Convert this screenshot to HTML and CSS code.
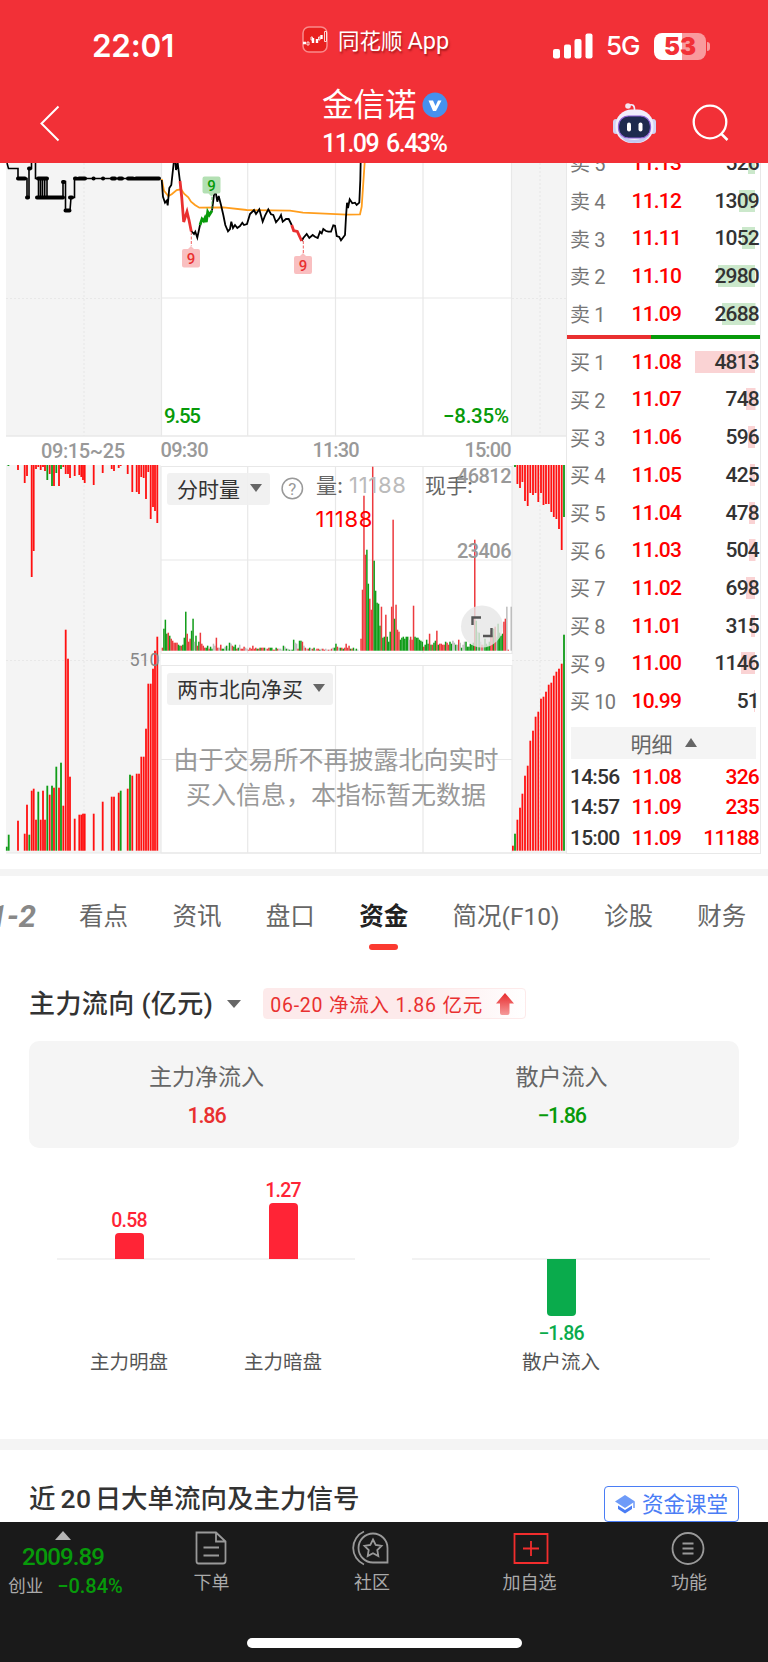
FILE: index.html
```html
<!DOCTYPE html>
<html lang="zh-CN">
<head>
<meta charset="UTF-8">
<meta name="viewport" content="width=device-width, initial-scale=1.0">
<title>金信诺</title>
<link rel="stylesheet" href="styles.css">
</head>
<body>
<header class="header">
  <div class="status">
    <div class="time">22:01</div>
    <div class="app">
      <svg width="26" height="27" viewBox="0 0 26 27">
        <rect x="1" y="1" width="24" height="25" rx="6" fill="#e8201f" stroke="#f98a8c" stroke-width="1.5"/>
        <path d="M1 17h3M11 12v5M15 13v4M19.500 9v4" stroke="#fff" stroke-width="2.400" fill="none"/>
        <path d="M5 16h2v3h-2zM9 11h1.500v3h-1.500zM16.500 11h1.500v3h-1.500zM22.500 5.500h2v10h-2z" fill="none" stroke="#fff" stroke-width=".8"/>
      </svg>
      <span>同花顺<i>App</i></span>
    </div>
    <div class="signal">
      <svg width="40" height="26" viewBox="0 0 40 26" fill="#fff">
        <rect x="0" y="16" width="7" height="9.5" rx="2"/>
        <rect x="11" y="11.500" width="7" height="14" rx="2"/>
        <rect x="21.500" y="6" width="7" height="19.500" rx="2"/>
        <rect x="32.500" y="0.500" width="7" height="25" rx="2"/>
      </svg>
      <span class="net">5G</span>
      <div class="battery"><b>5</b><b>3</b></div>
    </div>
  </div>
  <div class="nav">
    <svg class="back" width="20" height="37" viewBox="0 0 20 37"><path d="M18.500 1.500L1.500 18.500L18.500 35.500" fill="none" stroke="#fff" stroke-width="2"/></svg>
    <div class="stock">
      <div class="name">金信诺
        <svg width="26" height="26" viewBox="0 0 26 26"><circle cx="13" cy="13" r="12.500" fill="#4691ee"/><path d="M6.500 8.500h4.500l2.500 5.500 2.500-5.500h3.500l-5.500 10.500h-3z" fill="#fff"/></svg>
      </div>
      <div class="quote">11.09 6.43%</div>
    </div>
    <div class="tools">
      <svg width="45" height="42" viewBox="0 0 45 42">
        <path d="M16 3.500q7-3 6.500 5" stroke="#eef" stroke-width="1.600" fill="none"/>
        <circle cx="16" cy="4" r="2.800" fill="#f5e6f2"/>
        <rect x="1" y="17" width="6" height="15" rx="3" fill="#cfd3f4"/>
        <rect x="38" y="17" width="6" height="15" rx="3" fill="#cfd3f4"/>
        <rect x="3.500" y="7.500" width="38" height="33.500" rx="16" fill="#f1edfb"/>
        <path d="M6 31q16 14 33 0q-5 10-16.500 10T6 31" fill="#c3c9f0"/>
        <rect x="6.500" y="14" width="32" height="22" rx="10" fill="#1e2a4e" stroke="#8b5fd6" stroke-width="1.200"/>
        <rect x="15" y="20.500" width="4" height="9" rx="2" fill="#fff"/>
        <rect x="26.500" y="20.500" width="4" height="9" rx="2" fill="#fff"/>
      </svg>
      <svg width="38" height="38" viewBox="0 0 38 38"><circle cx="18" cy="18" r="16.300" fill="none" stroke="#fff" stroke-width="2.300"/><path d="M29 29.500L35.500 36" stroke="#fff" stroke-width="2.500"/></svg>
    </div>
  </div>
</header>

<section class="market">
  <div class="chart">
    <svg width="568" height="691" viewBox="0 163 568 691">
      <rect x="6" y="163" width="155" height="273" fill="#f4f4f4"/>
      <rect x="6" y="465" width="155" height="388" fill="#f4f4f4"/>
      <rect x="512" y="163" width="54" height="273" fill="#f4f4f4"/>
      <rect x="512" y="465" width="54" height="388" fill="#f4f4f4"/>
      <g stroke="#e8e8e8" stroke-width="1.200" fill="none">
        <path d="M161.500 163V436.500M511.500 163V436.500M247.700 163V436M335.500 163V436M423 163V436M161 298H512"/>
        <path d="M6 436H566" stroke-width="1.600"/>
        <path d="M161 466.500H512V653.500H161ZM161 665.500H512V853H161ZM247.700 466V653M335.500 466V653M423 466V653M161 560H512"/>
        <path d="M247.700 665V853M335.500 665V853M423 665V853M161 759.500H512M6 853H566"/>
        <path d="M84 163V436M540 163V436M6 298.500H161M512 298.500H566M84 465V853M540 465V853M6 660.500H161M512 660.500H566" stroke-dasharray="2 2"/>
      </g>

      <!-- call auction prices -->
      <path d="M7 163L8.500 168.500H18V178.500H27V197.500H29V168.500H31.500V163M35.500 163V178.500H45M38.500 178.500V197.500M40.500 178.500V197.500M42.500 178.500V197.500M44.700 178.500V197.500M47 178.500V197.500M37 197.500H63V181.500H65.500V210.500H70L71 197.500H74.500V178.500H160" fill="none" stroke="#000" stroke-width="1.600"/>
      <path d="M18 178.500h7M37 197.500h26M65.500 210.500h4M63 182h1M27 197.500h1M29 168.500h1M70 197.500h2M38 178.500h9M75 178.500h1M79 178.500h6M93.500 178.500h.1M103 178.500h.1M112 178.500h3M119 178.500h3M128 178.500h5M136 178.500h23" fill="none" stroke="#000" stroke-width="4" stroke-linecap="round"/>

      <!-- average and price -->
      <path d="M161.700 179L164 190.700L168.300 196L171.700 194.300L176.700 190L181 189.300L184.300 194L188.300 197.300L191 201.700L195 205L199.300 207.700L223.300 207.300L246.700 210L290 210.700L303 212.700L346.700 214.700L360 214.300L361.700 206.700L364.700 162" fill="none" stroke="#ff9d1c" stroke-width="1.800"/>
      <path d="M161.700 180L163 196.700L165 202.700L166.700 200.700L167.700 205.300L169.300 188L171.300 185L173.700 163L175.300 160L176 170L177.700 163L180 182M191.300 231L194 234L195.300 231.700L197.300 237.700L200 225M212 210.700L214.300 192.700L216 194L217.300 201.700L218.700 196L221 205L223.300 215L225.300 225L228 231.300L230 229L231.300 221.700L233 228L235 225L237.300 228L240 226L242.300 222.700L244 225L247 224L250 214L254 210L256 214L259.300 209.300L262.700 221.700L265.300 215L268.300 209.300L271 214.300L273.300 215L276 222.300L279.300 218.300L281 215L282.700 221.700L286 219L288.700 219L291.700 225M301.700 241L303.300 238L306.700 234L309.300 238L312.700 235L315 236.700L317.700 238L320 231.700L321.700 233.300L323.300 229L326 231L328.300 231.700L331 231.700L333.300 225.300L335 225.700L336.700 236L339.300 237L341 240.300L343.300 237.300L345 235L346 216.700L347 202.700L348 208L349.700 199.300L352.300 203.300L355 202.700L356.700 205L359.300 202.700L360.300 180L360.700 160" fill="none" stroke="#000" stroke-width="1.800"/>
      <path d="M180 181L181.700 197L183.700 222L185.300 217L187 211.700L189 220L191.300 231.500M291.700 225L293.700 230.700L297.300 231.500L301.700 241" fill="none" stroke="#e93030" stroke-width="2.800"/>
      <path d="M200 225L202 219L203.700 221L205 218L206.300 222L207.700 212L209.300 215L212 210.700" fill="none" stroke="#079a0a" stroke-width="2.800"/>
      <path d="M191.300 232V246M303.300 241V253" stroke="#f06060" stroke-dasharray="3 1.500"/>
      <path d="M212 197V210" stroke="#53b653" stroke-dasharray="3 1.500"/>
      <path d="M184 249h4l3-3 3 3h4q2 0 2 2v14.500q0 2-2 2h-14q-2 0-2-2v-14.500q0-2 2-2M296 256h4l3-3 3 3h4q2 0 2 2v14q0 2-2 2h-14q-2 0-2-2v-14q0-2 2-2" fill="#f9bfc0"/>
      <path d="M204.500 176.500h14q2 0 2 2v13q0 2-2 2h-4l-3 3-3-3h-4q-2 0-2-2v-13q0-2 2-2" fill="#b3e0b3"/>
      <g class="mark">
        <text x="191" y="264">9</text>
        <text x="303" y="270.500">9</text>
        <text x="211.500" y="191" class="green">9</text>
      </g>

      <g class="num">
        <text x="164" y="423" textLength="37" class="green">9.55</text>
        <text x="443" y="423" textLength="66" class="green">−8.35%</text>
      </g>
      <g class="axis">
        <text x="41" y="458" textLength="84">09:15~25</text>
        <text x="160.500" y="457" textLength="48">09:30</text>
        <text x="312.500" y="457" textLength="47">11:30</text>
        <text x="464.500" y="457" textLength="47">15:00</text>
      </g>

      <g id="bars"></g>

      <circle cx="292.300" cy="488.500" r="10.200" fill="none" stroke="#999" stroke-width="1.500"/>
      <text x="292.300" y="494.500" class="help">?</text>
      <g class="legend">
        <text x="316" y="493">量:</text>
        <text x="349" y="492.500" class="pale">11188</text>
        <text x="425" y="493">现手:</text>
        <text x="315.500" y="527" class="red">11188</text>
      </g>
      <g class="axis">
        <text x="457" y="483" textLength="54.500">46812</text>
        <text x="457" y="558" textLength="54.500">23406</text>
        <text x="129.500" y="666" textLength="30" class="small">510</text>
      </g>
      <circle cx="482" cy="626.500" r="21" fill="#e6e6e6" opacity=".8"/>
      <path d="M472.500 625V617.500H481M491.500 628V636H483" fill="none" stroke="#555" stroke-width="2.400"/>
      <g class="note">
        <text x="336" y="769" textLength="325">由于交易所不再披露北向实时</text>
        <text x="336" y="804" textLength="300">买入信息，本指标暂无数据</text>
      </g>
    </svg>
    <div class="select volume">分时量<s></s></div>
    <div class="select north">两市北向净买<s></s></div>
  </div>
  <div class="book">
    <div id="sell"></div>
    <div class="ratio"></div>
    <div id="buy"></div>
    <div class="detail">明细<s></s></div>
    <div id="ticks"></div>
  </div>
</section>

<nav class="tabs">
  <span class="cut">1-2</span>
  <span>看点</span>
  <span>资讯</span>
  <span>盘口</span>
  <span class="active">资金</span>
  <span>简况(F10)</span>
  <span>诊股</span>
  <span>财务</span>
</nav>

<section class="flow">
  <div class="flow-title">
    <h2>主力流向 (亿元)</h2><s></s>
    <div class="tag">06-20 净流入 1.86 亿元
      <svg width="18" height="22" viewBox="0 0 18 22"><defs><linearGradient id="up" x2="0" y2="1"><stop stop-color="#e8292b"/><stop offset="1" stop-color="#f59a9a"/></linearGradient></defs><path d="M9 0L18 10.500H13.500V20q0 2-2 2H6q-2 0-2-2V10.500H0Z" fill="url(#up)"/></svg>
    </div>
  </div>
  <div class="summary">
    <div><p>主力净流入</p><b class="red">1.86</b></div>
    <div><p>散户流入</p><b class="green">−1.86</b></div>
  </div>
  <div class="columns">
    <div class="group">
      <div class="col"><div class="up"><b>0.58</b><i style="height:26px"></i></div><div class="down"></div><p>主力明盘</p></div>
      <div class="col"><div class="up"><b>1.27</b><i style="height:57px"></i></div><div class="down"></div><p>主力暗盘</p></div>
    </div>
    <div class="group">
      <div class="col"><div class="up"></div><div class="down"><i style="height:57px"></i><b>−1.86</b></div><p>散户流入</p></div>
    </div>
  </div>
</section>

<section class="recent">
  <h2>近<em>20</em>日大单流向及主力信号</h2>
  <div class="lesson">
    <svg width="20" height="19" viewBox="0 0 20 19"><path d="M10 0L20 6.500L10 13L0 6.500Z" fill="#6e9bf8"/><path d="M3 10.500L10 15L17 10.500V14L10 18.500L3 14Z" fill="#4a7df5"/><path d="M19 7V13" stroke="#6e9bf8" stroke-width="1.500"/></svg>
    <span>资金课堂</span>
  </div>
</section>

<footer class="footer">
  <div class="index"><s></s><strong>2009.89</strong><div><span>创业</span><em>−0.84%</em></div></div>
  <div class="item">
    <svg width="34" height="36" viewBox="0 0 34 36"><path d="M2.500 2.500H22L31.500 11.500V31Q31.500 33.500 29 33.500H4.500Q2.500 33.500 2.500 31ZM22 2.500V11.500H31.500M9.500 17.500H25M9.500 25.500H25"/></svg>
    <span>下单</span>
  </div>
  <div class="item">
    <svg width="38" height="36" viewBox="0 0 38 36"><path d="M21 3.500A14.500 14.500 0 0 0 21 32.500H35.500V18A14.500 14.500 0 0 0 21 3.500ZM12 1.500A18 18 0 0 0 12 34.500M21 9.500L23.700 15 29.500 15.800 25.300 20 26.300 26 21 23.200 15.700 26 16.700 20 12.500 15.800 18.300 15Z"/></svg>
    <span>社区</span>
  </div>
  <div class="item add">
    <svg width="38" height="36" viewBox="0 0 38 36"><path d="M2.500 4H35.500V33H2.500ZM19 11V26M11 18.500H27"/></svg>
    <span>加自选</span>
  </div>
  <div class="item">
    <svg width="36" height="36" viewBox="0 0 36 36"><circle cx="18" cy="18.500" r="15.500"/><path d="M12.500 13.500H23.500M12.500 18.500H23.500M12.500 23.500H23.500"/></svg>
    <span>功能</span>
  </div>
  <div class="home"></div>
</footer>
<script src="script.js"></script>
</body>
</html>
```
FILE: styles.css
```css
* {
  margin: 0;
  padding: 0;
  box-sizing: border-box;
}
body {
  width: 768px;
  height: 1662px;
  overflow: hidden;
  display: flex;
  flex-direction: column;
  background: #fff;
  color: #333;
  font-family: Roboto, "Noto Sans CJK SC", sans-serif;
}
i, em {
  font-style: normal;
}
s {
  display: inline-block;
  border: 6px solid transparent;
  border-top: 8px solid #666;
  border-bottom: 0;
}
.red { color: #e93030; }
.green { color: #079a0a; }

/* header */
.header {
  height: 163px;
  flex: none;
  background: #f23037;
  color: #fff;
}
.status {
  height: 80px;
  display: grid;
  grid-template-columns: 302px 251px auto;
  padding-top: 26px;
}
.time {
  padding-left: 92px;
  font: 600 31.5px/40px Inter, sans-serif;
  letter-spacing: -0.3px;
}
.app {
  display: flex;
  gap: 10px;
  font-size: 21.5px;
  line-height: 31px;
  text-shadow: 1px 2px 2px rgba(90, 0, 0, .5);
}
.app i {
  margin-left: 5px;
  font-size: 23.5px;
}
.signal {
  display: flex;
  align-items: center;
  height: 40px;
}
.net {
  width: 34px;
  margin: 0 14px 0 13px;
  font: 500 26px/38px Inter, sans-serif;
  letter-spacing: -1px;
}
.battery {
  width: 52px;
  height: 27px;
  display: flex;
  justify-content: center;
  position: relative;
  border-radius: 8px;
  background: linear-gradient(90deg, #fff 53%, #f99a9d 53%);
  color: #f23037;
  font: 700 24px/27px Inter, sans-serif;
}
.battery::after {
  content: "";
  position: absolute;
  left: 53px;
  top: 9px;
  width: 3px;
  height: 9px;
  border-radius: 0 3px 3px 0;
  background: #f99a9d;
}
.nav {
  display: grid;
  grid-template-columns: 282px 206px auto;
  padding-left: 40px;
}
.back {
  margin-top: 25px;
}
.stock {
  display: flex;
  flex-direction: column;
  align-items: flex-start;
}
.name {
  display: flex;
  align-items: center;
  gap: 5px;
  height: 50px;
  font-size: 31.5px;
  line-height: 44px;
  padding-top: 2px;
}
.name svg {
  margin-top: -3px;
}
.quote {
  font-size: 25px;
  font-weight: 500;
  line-height: 28px;
  letter-spacing: -1.5px;
  word-spacing: 3px;
  white-space: nowrap;
}
.tools {
  display: flex;
  align-items: center;
  gap: 35px;
  padding: 8px 0 0 84px;
}

/* chart and order book */
.market {
  display: flex;
  flex: none;
  height: 706px;
}
.chart {
  position: relative;
  width: 566px;
  flex: none;
}
.chart svg {
  display: block;
}
.chart text {
  font-size: 20.5px;
}
.num text {
  font-weight: 500;
}
.chart .green { fill: #079a0a; }
.axis text {
  fill: #999;
  font-size: 20px;
  font-weight: 500;
}
.axis .small {
  fill: #888;
  font-size: 18px;
  font-weight: 400;
}
.chart .mark text {
  fill: #e93030;
  font-size: 15px;
  font-weight: 500;
  text-anchor: middle;
}
.chart .mark .green { fill: #079a0a; }
.chart .help {
  fill: #999;
  font-size: 17px;
  text-anchor: middle;
}
.chart .legend text {
  fill: #666;
  font-family: Inter, "Noto Sans CJK SC", sans-serif;
  font-size: 21px;
}
.chart .legend .pale,
.chart .legend .red {
  fill: #bbb;
  font-size: 22px;
  letter-spacing: 0.7px;
}
.chart .legend .red { fill: #f00; }
.chart .note text {
  fill: #999;
  font-size: 25px;
  text-anchor: middle;
}
.select {
  position: absolute;
  left: 167px;
  height: 32px;
  display: flex;
  align-items: center;
  gap: 10px;
  padding: 0 8px 3px 10px;
  border-radius: 3px;
  background: rgba(239, 239, 239, .9);
  font-size: 21px;
}
.volume { top: 310px; }
.north { top: 510px; }

.book {
  width: 195px;
  height: 691px;
  padding-left: 3px;
  overflow: hidden;
  display: flex;
  flex-direction: column;
  justify-content: flex-end;
  border: solid #e8e8e8;
  border-width: 0 1px 1px;
}
.row {
  height: 37.7px;
  flex: none;
  display: grid;
  grid-template-columns: 61.500px 60px auto;
  align-items: center;
  font-size: 21px;
  font-weight: 500;
  letter-spacing: -0.8px;
}
.row span:first-child {
  color: #777;
  font-size: 20px;
  font-weight: 400;
}
.row u {
  margin-left: 5px;
  text-decoration: none;
}
.row .price { color: #f00; }
.row .vol {
  padding-right: 1px;
  line-height: 22px;
  text-align: right;
  background-position: right 5px top;
  background-repeat: no-repeat;
}
#sell .vol { background-image: linear-gradient(#cbe8cb, #cbe8cb); }
#buy .vol { background-image: linear-gradient(#fad3d4, #fad3d4); }
#ticks .row {
  height: 30.4px;
}
#ticks .row span:first-child {
  color: #333;
  font-size: 21px;
  font-weight: 500;
}
#ticks .vol { color: #f00; }
.ratio {
  flex: none;
  height: 3.5px;
  margin: 3px 0 4px -3px;
  background: linear-gradient(90deg, #e93030 43.5%, #079a0a 43.5%);
}
.detail {
  flex: none;
  height: 32px;
  margin: 7px 4px 3px 1px;
  display: flex;
  align-items: center;
  justify-content: center;
  gap: 12px;
  background: #f4f4f4;
  color: #666;
  font-size: 21px;
}
.detail s {
  border-top: 0;
  border-bottom: 9px solid #666;
}

/* tabs */
.tabs {
  flex: none;
  height: 88px;
  display: flex;
  padding-top: 3px;
  border-top: 7px solid #f4f4f4;
  color: #666;
  font-size: 24.5px;
  line-height: 76px;
  white-space: nowrap;
}
.tabs span {
  margin-right: 44.4px;
}
.tabs .cut {
  width: 36px;
  margin-right: 43px;
  display: flex;
  justify-content: flex-end;
  font-style: italic;
  font-weight: 700;
  font-size: 31px;
  color: #888;
}
.tabs .active {
  position: relative;
  color: #222;
  font-weight: 600;
}
.tabs .active::after {
  content: "";
  position: absolute;
  left: 10px;
  top: 65px;
  width: 29px;
  height: 6px;
  border-radius: 3px;
  background: #fb3a30;
}

/* money flow */
.flow {
  flex: none;
  height: 482px;
  padding: 0 29px;
}
.flow-title {
  display: flex;
  align-items: center;
  height: 84px;
  padding-top: 9px;
}
.flow-title h2 {
  font-size: 26px;
  font-weight: 500;
  line-height: 34px;
  letter-spacing: 0.4px;
  white-space: nowrap;
}
.flow-title s {
  margin: 0 22px 0 14px;
  border-width: 8px 7px 0;
}
.tag {
  display: flex;
  align-items: center;
  gap: 13px;
  width: 263px;
  height: 31px;
  padding-left: 6px;
  border: 1px solid #fdeaea;
  border-radius: 4px;
  background: linear-gradient(90deg, #fdeaeb 60%, #fff);
  color: #e93030;
  font-size: 19.5px;
  letter-spacing: 0.8px;
  white-space: nowrap;
}
.summary {
  height: 107px;
  display: grid;
  grid-template-columns: 1fr 1fr;
  padding-top: 20px;
  border-radius: 10px;
  background: #f5f5f5;
  text-align: center;
}
.summary p {
  font-size: 23px;
  line-height: 34px;
  color: #666;
}
.summary b {
  font-size: 21.5px;
  line-height: 42px;
  font-weight: 500;
  letter-spacing: -1.2px;
}
.columns {
  display: grid;
  grid-template-columns: 298px 298px;
  gap: 57px;
  padding: 31px 28px 0;
}
.group {
  display: flex;
  justify-content: center;
  background: linear-gradient(#f2f2f2, #f2f2f2) 0 79px / 100% 2px no-repeat;
}
.group:first-child {
  justify-content: flex-start;
}
.group:first-child .col:first-child { margin-left: -5px; }
.col {
  width: 154px;
  flex: none;
  text-align: center;
}
.up, .down {
  height: 80px;
  display: flex;
  flex-direction: column;
  align-items: center;
  color: #ff2436;
}
.up {
  justify-content: flex-end;
}
.down {
  height: 89px;
  color: #0aab4c;
}
.col i {
  width: 29px;
  border-radius: 4px 4px 0 0;
  background: #ff2436;
}
.down i {
  border-radius: 0 0 4px 4px;
  background: #0aab4c;
}
.col b {
  font-size: 19.5px;
  font-weight: 500;
  line-height: 24px;
  letter-spacing: -0.8px;
}
.down b {
  margin-top: 6px;
}
.col p {
  color: #555;
  font-size: 19.5px;
  line-height: 30px;
}

/* next block, partly under the footer */
.recent {
  flex: none;
  height: 83px;
  display: flex;
  justify-content: space-between;
  align-items: flex-end;
  padding: 0 29px;
  border-top: 11px solid #f4f4f4;
}
.recent h2 {
  padding-bottom: 6px;
  font-size: 26.5px;
  font-weight: 500;
}
.recent em {
  margin: 0 3px 0 5px;
  letter-spacing: 0.5px;
}
.lesson {
  width: 135px;
  height: 36px;
  display: flex;
  align-items: center;
  gap: 7px;
  padding-left: 10px;
  border: 1.500px solid #4a7df5;
  border-radius: 4px;
  color: #4a7df5;
  font-size: 21.500px;
  white-space: nowrap;
}
.lesson span {
  padding-bottom: 3px;
}

/* footer */
.footer {
  flex: none;
  height: 140px;
  display: grid;
  grid-template-columns: 130px 163px 158px 157px 162px;
  grid-template-rows: 116px 10px;
  background: #1a1a1a;
  color: #aaa;
  font-size: 18px;
}
.index {
  display: flex;
  flex-direction: column;
  align-items: center;
  padding: 9px 4px 0 0;
  color: #079a0a;
}
.index s {
  border: 8px solid transparent;
  border-top: 0;
  border-bottom: 9px solid #b5b5b5;
}
.index strong {
  font-size: 24px;
  font-weight: 500;
  line-height: 35px;
  letter-spacing: -0.9px;
}
.index div {
  display: flex;
  gap: 14px;
  line-height: 22px;
  padding-left: 5px;
}
.index span {
  color: #aaa;
  font-size: 17.500px;
}
.index em {
  font-size: 20px;
  font-weight: 500;
}
.item {
  display: flex;
  flex-direction: column;
  align-items: center;
  padding: 8px 0 0;
}
.item svg {
  margin-left: -2px;
  fill: none;
  stroke: #999;
  stroke-width: 1.8;
}
.item span {
  line-height: 33px;
}
.add svg {
  margin-left: 2px;
  stroke: #f22d2d;
}
.home {
  grid-column: 1 / -1;
  width: 275px;
  height: 10px;
  margin-left: 247px;
  border-radius: 5px;
  background: #fff;
}
```
FILE: script.js
```javascript
const colors = { r: "#ff1010", g: "#109c18", x: "#bdbdbd" };
const svg = document.querySelector("#bars");

function bar(x, y, w, h, color) {
  let rect = document.createElementNS("http://www.w3.org/2000/svg", "rect");
  rect.setAttribute("x", x);
  rect.setAttribute("y", y);
  rect.setAttribute("width", w);
  rect.setAttribute("height", h);
  rect.setAttribute("fill", color);
  svg.appendChild(rect);
}

// auction bars: "position color height", hanging from the top or standing on the bottom
function auction(data, hanging) {
  data.split(",").forEach(item => {
    let [x, h] = item.split(/[rg]/).map(Number);
    let color = item.includes("g") ? colors.g : colors.r;
    bar(x - 0.9, hanging ? 465 : 850.7 - h, 1.8, h, color);
  });
}

auction("8.4g1,18r5,24.7r18,27r11,31.7r112,33.7r86,36r4,38.3r2,40.7r5,43r2,45r6,47.3g15,49.7r9,52g21,54r21,56.3g8,59r21,61g4,63.3r2,65.7r9,68r9,70r13,74.7r11,79.3r10,81.3r12,83r15,84.7r18,93.7r20,102.7r8,111.7r4,114r6,118.7r3,120.7r1,127.7r9,132.3r27,136.7r27,139r29,141.3r12,143.7r13,146r34,148.3r7,150.7r54,153r42,155r46,157.3r58", true);
auction("6.8g4,8.7g16,18r30,24.7r17,27r46,29.3g16,31.7r60,33.7r62,36r31,38.3g59,40.7r31,43r60,45r31,47.3g65,49.7r56,52g65,54r63,56.3g84,59r63,61g88,63.3r45,65.7r221,68r192,70r74,74.7r32,79.3r36,81.3r36,83r37,84.7r37,93.7r37,102.7r49,111.7r54,114r54,118.7r58,120.7g60,127.7r62,130g76,132.3r75,136.7r77,139r77,141.3r94,143.7r94,146r122,148.3r167,150.7r167,153r182,155r200,157.3r214");
auction("515g2,517.4r19,520r23,522.4r17,525r36,527.7r41,530.3r28,533r30,535.6r28,538.3r37,541r28,543.5r40,546r39,548.7r39,551.3r47,553.8r52,556.4r54,559r64,561.7r85,564g52", true);
auction("512.9r5,515g17,517.4r31,520r43,522.4r57,525r75,527.7r85,530.3r110,533r120,535.6r134,538.3r139,541r152,543.5r154,546r159,548.7r166,551.3r168,553.8r175,556.4r179,559r182,561.7r187,564g216");

// minute volumes
function volumes(start, data) {
  data.split(" ").forEach((v, i) => {
    let color = { r: "#ec3a3e", g: colors.g, x: colors.x }[v[0]];
    let h = Number(v.slice(1));
    bar(start + i * 1.458, 650.7 - h, 1.5, h, color);
  });
}
volumes(161.7, "r3 g22 g31 g17 r18 g15 r12 r10 r8 r8 r8 g6 g5 r5 g6 g13 g39 r17 r9 r12 g20 g32 x9 g15 r5 g9 r18 r7 r5 r3 g3 g5 r2 g4 g2 x7 x5 r13 r3 x3 r6 g2 g2 x4 g5 x2 g8 x7 r5 g4 g6 r2 g3 x6 r2 r2 r4 x3 x2 r1 r3 r2 r5 r2 r3 g2 r2 g3 r3 r3 g3 x2 r2 r3 g3 g3 r1 r1 g3 r2 x2 x2 x1 g5 x4 g2 x2 g1 x1 g1 g11 x8 x7 r2 g10 g10 r9 x5 r3 x2 r2 g3 x2 r2 g3 x1 r2 r2 g1 x2 r2 r1 x2 x1 r1 x1 r2 x3 g3 g7 r4 x3 g3 r3 g2 r3 r7 r3 r5 g2 r2 g3 x1 g2 x1");
volumes(360.3, "r12 r61 r155 r96 g101 g67 r52 r41 r184 g90 g60 g48 g47 g25 r44 g13 g14 r36 g14 g9 g19 r44 r131 g32 r46 r21 r19 g11 g13 g14 g12 g14 g14 x11 r14 r11 r45 g14 g13 g13 g11 g10 g9 r4 g6 g11 g7 r17 g6 r6 g8 g10 r20 g6 r7 r7 r6 r6 g9 r8 r6 g9 g7 x10 x8 g6 x6 r11 x8 g3 x6 x9 g9 g4 g4 g7 g6 g8 r111 g30 x19 g18 x9 r6 x6 g12 g7 g5 g9 r20 r16 g22 r24 x14 g27 g18 g15 g17 r29 r32 x44 r1 x0 x44");

// order book
function rows(id, data) {
  document.querySelector(id).innerHTML = data.map(([name, price, vol, w]) => {
    let bg = w ? ` style="background-size:${w}px 22px"` : "";
    let label = name.replace(/([卖买])(\d+)/, "$1<u>$2</u>");
    return `<div class="row"><span>${label}</span><span class="price">${price}</span><span class="vol"${bg}>${vol}</span></div>`;
  }).join("");
}
rows("#sell", [["卖5", "11.13", "526", 7], ["卖4", "11.12", "1309", 16], ["卖3", "11.11", "1052", 13], ["卖2", "11.10", "2980", 37], ["卖1", "11.09", "2688", 33.5]]);
rows("#buy", [["买1", "11.08", "4813", 60], ["买2", "11.07", "748", 9.5], ["买3", "11.06", "596", 7], ["买4", "11.05", "425", 5], ["买5", "11.04", "478", 6], ["买6", "11.03", "504", 6.5], ["买7", "11.02", "698", 9], ["买8", "11.01", "315", 4], ["买9", "11.00", "1146", 14], ["买10", "10.99", "51", 1]]);
rows("#ticks", [["14:56", "11.08", "326"], ["14:57", "11.09", "235"], ["15:00", "11.09", "11188"]]);
```
